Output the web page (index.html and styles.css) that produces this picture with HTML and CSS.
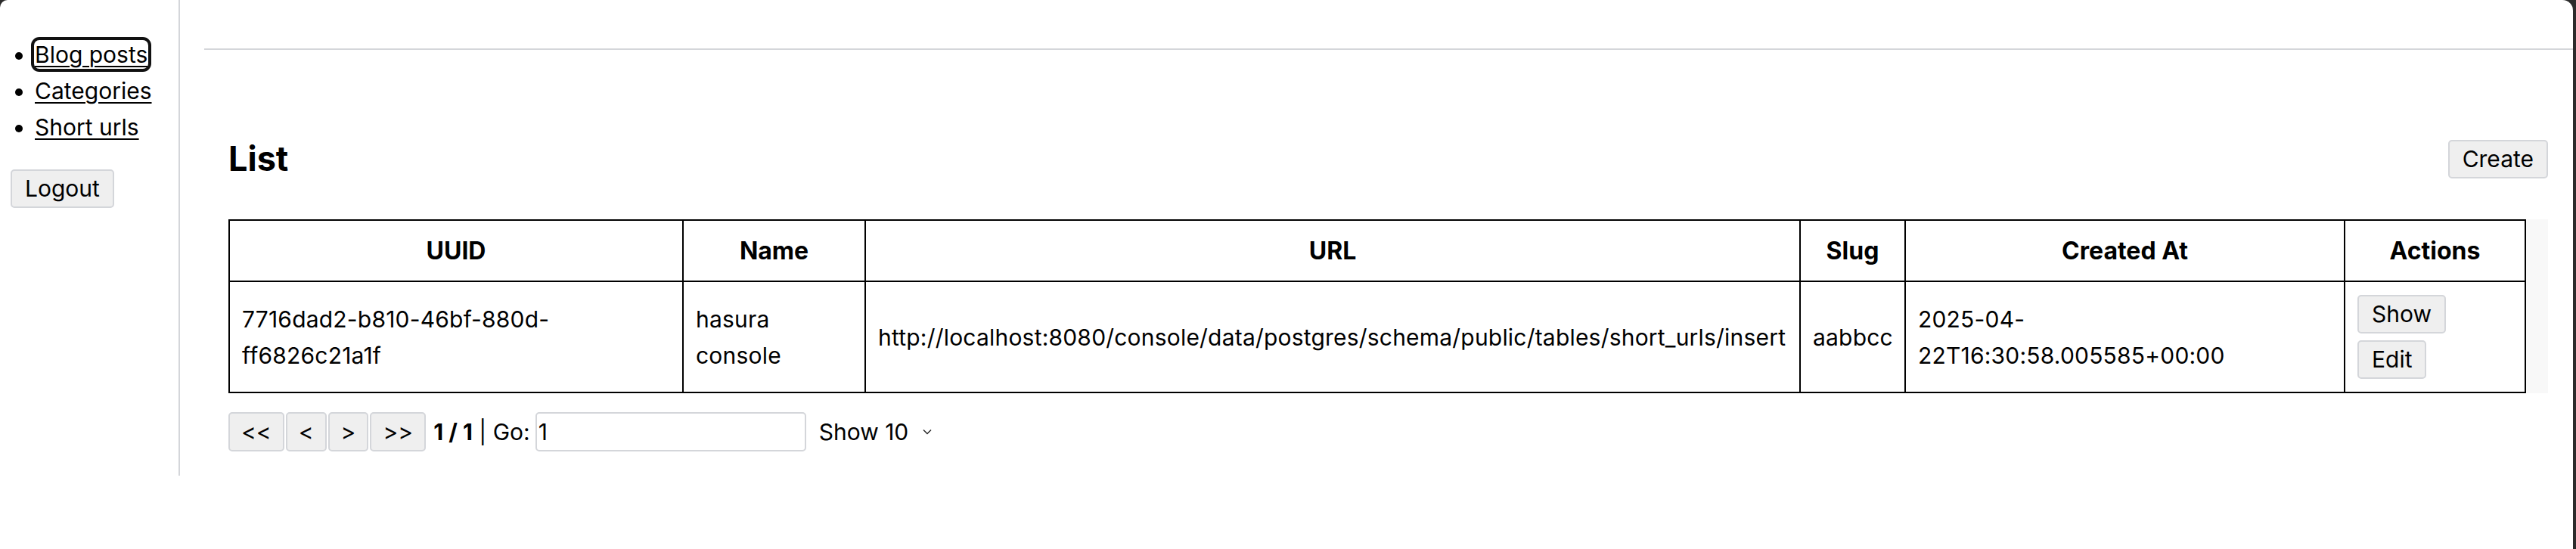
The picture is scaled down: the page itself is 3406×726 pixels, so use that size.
FILE: index.html
```html
<!DOCTYPE html>
<html lang="en">
<head>
<meta charset="utf-8">
<title>Short urls - List</title>
<link rel="stylesheet" href="styles.css">
</head>
<body>
<div class="layout">
  <aside class="sidebar">
    <ul class="nav">
      <li><a href="#" class="nav-link is-focused">Blog posts</a></li>
      <li><a href="#" class="nav-link">Categories</a></li>
      <li><a href="#" class="nav-link">Short urls</a></li>
    </ul>
    <button class="btn" type="button">Logout</button>
  </aside>
  <main class="main">
    <header class="topbar"></header>
    <section class="content">
      <div class="page-head">
        <h2 class="page-title">List</h2>
        <button class="btn" type="button">Create</button>
      </div>
      <div class="table-wrap">
        <table class="data-table">
          <colgroup>
            <col class="c-uuid">
            <col class="c-name">
            <col class="c-url">
            <col class="c-slug">
            <col class="c-created">
            <col class="c-actions">
          </colgroup>
          <thead>
            <tr>
              <th>UUID</th>
              <th>Name</th>
              <th>URL</th>
              <th>Slug</th>
              <th>Created At</th>
              <th>Actions</th>
            </tr>
          </thead>
          <tbody>
            <tr>
              <td>7716dad2-b810-46bf-880d-ff6826c21a1f</td>
              <td>hasura console</td>
              <td class="nowrap">http://localhost:8080/console/data/postgres/schema/public/tables/short_urls/insert</td>
              <td class="nowrap">aabbcc</td>
              <td class="created">2025-04-22T16:30:58.005585+00:00</td>
              <td>
                <div class="actions">
                  <button class="btn" type="button">Show</button>
                  <button class="btn" type="button">Edit</button>
                </div>
              </td>
            </tr>
          </tbody>
        </table>
      </div>
      <div class="pager">
        <div class="pager-buttons">
          <button class="btn pager-btn" type="button">&lt;&lt;</button>
          <button class="btn pager-btn" type="button">&lt;</button>
          <button class="btn pager-btn" type="button">&gt;</button>
          <button class="btn pager-btn" type="button">&gt;&gt;</button>
        </div>
        <span class="pager-status"><strong>1 / 1</strong> | Go:</span>
        <input class="goto" type="text" value="1">
        <div class="page-size">
          <select class="page-size-select">
            <option>Show 10</option>
            <option>Show 20</option>
            <option>Show 50</option>
          </select>
          <svg class="chevron" width="12" height="8" viewBox="0 0 12 8" aria-hidden="true"><polyline points="1,1.5 6,6.5 11,1.5" fill="none" stroke="#222" stroke-width="1.4"/></svg>
        </div>
      </div>
    </section>
  </main>
</div>
</body>
</html>
```

FILE: styles.css
```css
html {
  background: #2b2b2b;
}

body {
  margin: 0 4px 0 0;
  min-height: 726px;
  background: #ffffff;
  border-radius: 10px 14px 0 0;
  color: #000;
  font-family: Inter, "Liberation Sans", sans-serif;
  font-size: 30px;
  line-height: 48px;
}

.layout {
  display: flex;
  align-items: stretch;
}

.sidebar {
  flex: 0 0 auto;
  width: 222px;
  padding: 16px 0 0 14px;
  border-right: 2px solid #d4d6da;
}

.nav {
  margin: 32px 0;
  padding-left: 32px;
}

.nav-link {
  color: #000;
  text-decoration: underline;
  text-decoration-thickness: 2px;
  text-underline-offset: 4px;
}

.nav-link.is-focused {
  outline: 4px solid #111;
  outline-offset: 1px;
  border-radius: 6px;
}

.btn {
  font-family: Inter, "Liberation Sans", sans-serif;
  font-size: 30px;
  line-height: 39px;
  padding: 4px 17px;
  color: #000;
  background: #efefef;
  border: 2px solid #d4d6da;
  border-radius: 5px;
}

.main {
  flex: 1 1 auto;
  padding: 0 0 32px 32px;
}

.topbar {
  height: 64px;
  border-bottom: 2px solid #d4d6da;
}

.content {
  padding: 112px 33px 0 32px;
}

.page-head {
  display: flex;
  justify-content: space-between;
  align-items: center;
  height: 64px;
  margin-bottom: 48px;
}

.page-title {
  margin: 0;
  font-size: 45px;
  line-height: 64px;
  font-weight: 700;
}

.table-wrap {
  background: #f8f8f8;
}

.data-table {
  table-layout: fixed;
  width: 3038px;
  border-collapse: separate;
  border-spacing: 0;
  background: #fff;
  border-top: 2px solid #000;
  border-left: 2px solid #000;
  font-size: 30px;
  line-height: 48px;
  letter-spacing: 0.2px;
}

.c-uuid { width: 600px; }
.c-name { width: 241px; }
.c-url { width: 1236px; }
.c-slug { width: 139px; }
.c-created { width: 581px; }
.c-actions { width: 239px; }

.data-table th,
.data-table td {
  border-right: 2px solid #000;
  border-bottom: 2px solid #000;
  padding: 17px 16px;
  vertical-align: middle;
  text-align: left;
}

.data-table th {
  padding: 16px 16px 15px;
  text-align: center;
  font-size: 32px;
  font-weight: 700;
  letter-spacing: 0;
}

.data-table td.created {
  padding-right: 40px;
}

.nowrap {
  white-space: nowrap;
}

.actions {
  display: flex;
  flex-direction: column;
  align-items: flex-start;
  gap: 9px;
}

.pager {
  display: flex;
  align-items: center;
  height: 52px;
  margin-top: 25px;
}

.pager-buttons {
  display: flex;
  gap: 2px;
}

.pager-btn {
  height: 52px;
  padding: 4px 15px;
}

.pager-status {
  margin-left: 10px;
  margin-right: 7px;
}

.goto {
  box-sizing: border-box;
  width: 358px;
  height: 52px;
  padding: 0 2px;
  font-family: Inter, "Liberation Sans", sans-serif;
  font-size: 30px;
  color: #000;
  border: 2px solid #d4d6da;
  border-radius: 5px;
  background: #fff;
}

.page-size {
  display: flex;
  align-items: center;
  margin-left: 17px;
}

.page-size-select {
  appearance: none;
  -webkit-appearance: none;
  border: none;
  background: transparent;
  padding: 0;
  font-family: Inter, "Liberation Sans", sans-serif;
  font-size: 30px;
  color: #000;
}

.chevron {
  margin-left: 12px;
}
```
